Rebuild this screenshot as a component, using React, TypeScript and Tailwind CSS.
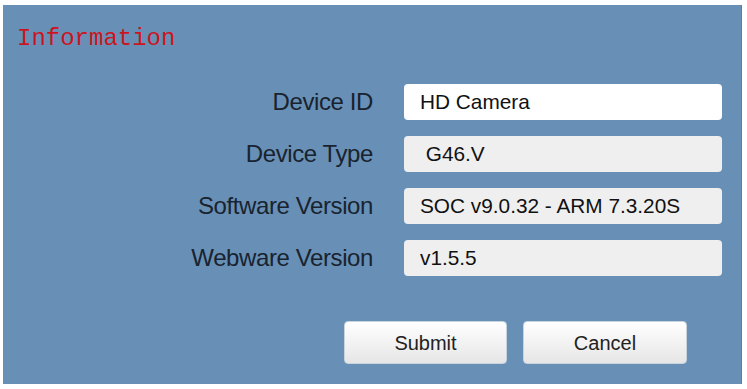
export default function App() {
  const rows = [
    { label: 'Device ID', value: 'HD Camera', editable: true },
    { label: 'Device Type', value: '\u00a0G46.V', editable: false },
    { label: 'Software Version', value: 'SOC v9.0.32 - ARM 7.3.20S', editable: false },
    { label: 'Webware Version', value: 'v1.5.5', editable: false },
  ];

  return (
    <div className="w-[747px] h-[389px] bg-white pt-[5px] pl-[3px] pr-[5px] pb-[5px] font-['Liberation_Sans',Arial,sans-serif]">
      <div className="h-full bg-[#6890b6] border-r border-[#5b7fa3] flex flex-col">
        <h1 className="pl-[14px] pt-[19px] text-[24px] leading-[30px] text-[#cc1420] font-['Liberation_Mono',monospace]">
          Information
        </h1>

        <div className="mt-[30px] flex flex-col gap-[16px]">
          {rows.map((row) => (
            <div key={row.label} className="flex items-center">
              <div className="w-[370px] text-right text-[24px] tracking-[-0.4px] text-[#18232f]">{row.label}</div>
              <div
                className={
                  'ml-[31px] w-[318px] h-[36px] rounded-[4px] flex items-center pl-[16px] text-[20.8px] text-[#111] ' +
                  (row.editable ? 'bg-white' : 'bg-[#efefef]')
                }
              >
                {row.value}
              </div>
            </div>
          ))}
        </div>

        <div className="mt-[45px] flex gap-[16px] pl-[341px]">
          <button className="w-[163px] h-[43px] rounded-[4px] bg-gradient-to-b from-white to-[#e6e6e6] border border-[#c9d3dd] text-[20px] text-[#222]">
            Submit
          </button>
          <button className="w-[164px] h-[43px] rounded-[4px] bg-gradient-to-b from-white to-[#e6e6e6] border border-[#c9d3dd] text-[20px] text-[#222]">
            Cancel
          </button>
        </div>
      </div>
    </div>
  );
}
